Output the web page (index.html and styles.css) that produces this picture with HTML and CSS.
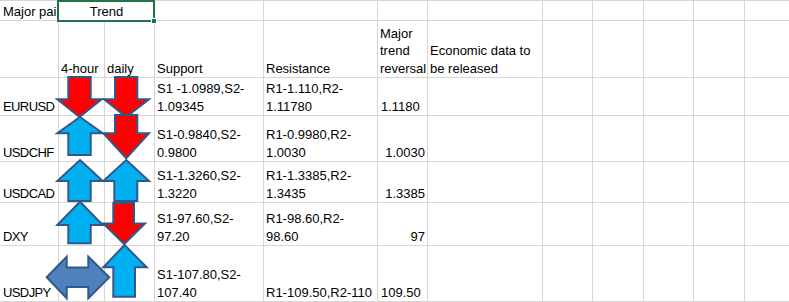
FILE: index.html
```html
<!DOCTYPE html>
<html>
<head>
<meta charset="utf-8">
<title>Major pairs trend</title>
<link rel="stylesheet" href="styles.css">
</head>
<body>
<div class="page">
  <div class="sheet">
    <!-- row 1 -->
    <div class="c ca"><span class="t">Major pair</span></div>
    <div class="c merged"><span class="t">Trend</span></div>
    <div class="c"></div><div class="c"></div><div class="c"></div><div class="c"></div>
    <div class="c"></div><div class="c"></div><div class="c"></div><div class="c"></div><div class="c"></div>

    <!-- row 2 -->
    <div class="c ca"></div>
    <div class="c"><span class="t">4-hour</span></div>
    <div class="c"><span class="t">daily</span></div>
    <div class="c"><span class="t">Support</span></div>
    <div class="c"><span class="t">Resistance</span></div>
    <div class="c"><span class="t">Major<br>trend<br>reversal</span></div>
    <div class="c"><span class="t">Economic data to<br>be released</span></div>
    <div class="c"></div><div class="c"></div><div class="c"></div><div class="c"></div><div class="c"></div>

    <!-- row 3 -->
    <div class="c ca"><span class="t pair">EURUSD</span></div>
    <div class="c"></div>
    <div class="c"></div>
    <div class="c"><span class="t">S1 -1.0989,S2-<br>1.09345</span></div>
    <div class="c"><span class="t">R1-1.110,R2-<br>1.11780</span></div>
    <div class="c txt"><span class="t">1.1180</span></div>
    <div class="c"></div>
    <div class="c"></div><div class="c"></div><div class="c"></div><div class="c"></div><div class="c"></div>

    <!-- row 4 -->
    <div class="c ca"><span class="t pair">USDCHF</span></div>
    <div class="c"></div>
    <div class="c"></div>
    <div class="c"><span class="t">S1-0.9840,S2-<br>0.9800</span></div>
    <div class="c"><span class="t">R1-0.9980,R2-<br>1.0030</span></div>
    <div class="c num"><span class="t">1.0030</span></div>
    <div class="c"></div>
    <div class="c"></div><div class="c"></div><div class="c"></div><div class="c"></div><div class="c"></div>

    <!-- row 5 -->
    <div class="c ca"><span class="t pair">USDCAD</span></div>
    <div class="c"></div>
    <div class="c"></div>
    <div class="c"><span class="t">S1-1.3260,S2-<br>1.3220</span></div>
    <div class="c"><span class="t">R1-1.3385,R2-<br>1.3435</span></div>
    <div class="c num"><span class="t">1.3385</span></div>
    <div class="c"></div>
    <div class="c"></div><div class="c"></div><div class="c"></div><div class="c"></div><div class="c"></div>

    <!-- row 6 -->
    <div class="c ca"><span class="t pair">DXY</span></div>
    <div class="c"></div>
    <div class="c"></div>
    <div class="c"><span class="t">S1-97.60,S2-<br>97.20</span></div>
    <div class="c"><span class="t">R1-98.60,R2-<br>98.60</span></div>
    <div class="c num"><span class="t">97</span></div>
    <div class="c"></div>
    <div class="c"></div><div class="c"></div><div class="c"></div><div class="c"></div><div class="c"></div>

    <!-- row 7 -->
    <div class="c ca"><span class="t pair">USDJPY</span></div>
    <div class="c"></div>
    <div class="c"></div>
    <div class="c"><span class="t">S1-107.80,S2-<br>107.40</span></div>
    <div class="c"><span class="t">R1-109.50,R2-110</span></div>
    <div class="c txt"><span class="t">109.50</span></div>
    <div class="c"></div>
    <div class="c"></div><div class="c"></div><div class="c"></div><div class="c"></div><div class="c"></div>
  </div>

  <div class="selection"><span class="handle"></span></div>

  <svg class="shapes" width="789" height="302" viewBox="0 0 789 302" xmlns="http://www.w3.org/2000/svg">
    <g stroke="#34578a" stroke-width="2" stroke-linejoin="miter">
      <!-- EURUSD -->
      <polygon class="red" points="68.3,77 90.7,77 90.7,99.3 101.7,99.3 79.5,117 57.3,99.3 68.3,99.3"/>
      <polygon class="red" points="115,77 137.3,77 137.3,99.3 149,99.3 126.3,117 104,99.3 115,99.3"/>
      <!-- USDCHF -->
      <polygon class="blue" points="80,117 102.7,133.3 90.7,133.3 90.7,155 68.3,155 68.3,133.3 57.3,133.3"/>
      <polygon class="red" points="115,115 137.3,115 137.3,133.3 149,133.3 126.2,158.3 103.3,133.3 115,133.3"/>
      <!-- USDCAD -->
      <polygon class="blue" points="80,160 102.7,181 90.7,181 90.7,201 68.3,201 68.3,181 57.3,181"/>
      <polygon class="blue" points="126.2,160 149,181 137.3,181 137.3,201 114.3,201 114.3,181 103.3,181"/>
      <!-- DXY -->
      <polygon class="blue" points="80,201.7 102.7,225 90.7,225 90.7,243.3 68.3,243.3 68.3,225 57.3,225"/>
      <polygon class="red" points="113.3,203 134,203 134,223.5 145,223.5 124.2,244 103.3,223.5 113.3,223.5"/>
      <!-- USDJPY -->
      <polygon class="blue" points="124.5,245 146.7,267.3 135,267.3 135,296.7 113.3,296.7 113.3,267.3 103.3,267.3"/>
      <polygon class="steel" points="46.7,277.3 66.7,256.7 66.7,267.5 88.3,267.5 88.3,256.7 109.3,277.3 88.3,298.3 88.3,287 66.7,287 66.7,298.3"/>
    </g>
  </svg>
</div>
</body>
</html>
```

FILE: styles.css
```css
html, body {
  margin: 0;
  padding: 0;
  background: #ffffff;
}

.page {
  position: relative;
  width: 789px;
  height: 302px;
  overflow: hidden;
  background: #ffffff;
  font-family: "Liberation Sans", Arial, sans-serif;
  font-size: 13px;
  color: #000000;
}

.sheet {
  display: grid;
  grid-template-columns: 59px 46px 50px 109px 114px 50px 115px 50px 51px 50px 51px 51px;
  grid-template-rows: 20px 57px 38px 46px 41px 43px 56px;
  width: 796px;
  border-top: 1px solid #d6d6d6;
}

.c {
  display: flex;
  flex-direction: column;
  justify-content: flex-end;
  min-width: 0;
  padding: 0 2px;
  border-right: 1px solid #d6d6d6;
  border-bottom: 1px solid #d6d6d6;
  overflow: hidden;
  white-space: nowrap;
  line-height: 17.5px;
}

.t {
  display: block;
}

.ca {
  padding-left: 3px;
  padding-right: 0;
}

.pair {
  letter-spacing: -0.6px;
}

.merged {
  grid-column: span 2;
  text-align: center;
}

.num {
  text-align: right;
}

.txt {
  padding-left: 3px;
}

.selection {
  position: absolute;
  left: 57px;
  top: 0;
  width: 98px;
  height: 22px;
  box-sizing: border-box;
  border: 2px solid #217346;
}

.handle {
  position: absolute;
  right: -4px;
  bottom: -4px;
  width: 4px;
  height: 4px;
  background: #217346;
  border: 1px solid #ffffff;
}

.shapes {
  position: absolute;
  left: 0;
  top: 0;
  pointer-events: none;
}

.red {
  fill: #ff0000;
}

.blue {
  fill: #00b0f0;
}

.steel {
  fill: #4f81bd;
}
```
